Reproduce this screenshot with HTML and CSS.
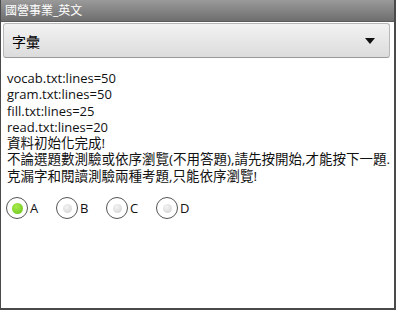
FILE: index.html
```html
<!DOCTYPE html>
<html lang="zh-Hant">
<head>
  <meta charset="UTF-8" />
  <title>國營事業_英文</title>
  <link rel="stylesheet" href="styles.css">
</head>
<body>
  <div class="frame">
    <div class="titlebar">國營事業_英文</div>

    <div class="spinner-row">
      <div class="spinner">
        <span class="spinner-text">字彙</span>
        <span class="spinner-arrow"></span>
      </div>
    </div>

    <div class="log">
      <div>vocab.txt:lines=50</div>
      <div>gram.txt:lines=50</div>
      <div>fill.txt:lines=25</div>
      <div>read.txt:lines=20</div>
      <div class="zh">資料初始化完成!</div>
      <div class="zh">不論選題數測驗或依序瀏覽(不用答題),請先按開始,才能按下一題.</div>
      <div class="zh">克漏字和閱讀測驗兩種考題,只能依序瀏覽!</div>
    </div>

    <div class="answers">
      <label class="radio"><span class="dot checked"></span>A</label>
      <label class="radio"><span class="dot"></span>B</label>
      <label class="radio"><span class="dot"></span>C</label>
      <label class="radio"><span class="dot"></span>D</label>
    </div>
  </div>
</body>
</html>
```

FILE: styles.css
```css
html, body {
  margin: 0;
  height: 100%;
}

body {
  font-family: "Open Sans", "Noto Sans CJK TC", sans-serif;
  background: #fff;
  color: #000;
}

.frame {
  height: 310px;
  box-sizing: border-box;
  border-left: 1px solid #4a4a4a;
  border-right: 2px solid #4a4a4a;
  border-bottom: 2px solid #4a4a4a;
  overflow: hidden;
}

.titlebar {
  height: 21px;
  line-height: 21px;
  padding-left: 5px;
  margin-left: -1px;
  margin-right: -2px;
  background: linear-gradient(to bottom, #9a9a9a, #6e6e6e);
  color: #fff;
  font-size: 12px;
  border-bottom: 1px solid #5a5a5a;
}

.spinner-row {
  padding: 1px 4px 0 2px;
}

.spinner {
  height: 33px;
  display: flex;
  align-items: center;
  justify-content: space-between;
  padding: 0 14px 0 8px;
  border: 1px solid #b8b8b8;
  border-bottom-color: #9a9a9a;
  border-radius: 3px;
  background: linear-gradient(to bottom, #f2f2f2, #dcdcdc);
}

.spinner-text {
  font-size: 14px;
}

.spinner-arrow {
  width: 0;
  height: 0;
  border-left: 5px solid transparent;
  border-right: 5px solid transparent;
  border-top: 6px solid #111;
}

.log {
  padding: 12px 0 0 6px;
  font-size: 13px;
  line-height: 16.3px;
  color: #111;
  white-space: nowrap;
}

.log .zh {
  font-size: 13.5px;
}

.answers {
  display: flex;
  padding: 13px 0 0 5px;
}

.radio {
  display: flex;
  align-items: center;
  width: 50px;
  font-size: 13px;
  color: #111;
}

.dot {
  width: 22px;
  height: 22px;
  box-sizing: border-box;
  border: 1px solid #555;
  border-radius: 50%;
  margin-right: 2px;
  display: flex;
  align-items: center;
  justify-content: center;
  background: #fff;
}

.dot::after {
  content: "";
  width: 9px;
  height: 9px;
  border-radius: 50%;
  background: radial-gradient(circle at 40% 35%, #f4f4f4, #cfcfcf);
}

.dot.checked::after {
  width: 11px;
  height: 11px;
  background: radial-gradient(circle at 40% 35%, #a8ec4a, #66c11a);
}
```
